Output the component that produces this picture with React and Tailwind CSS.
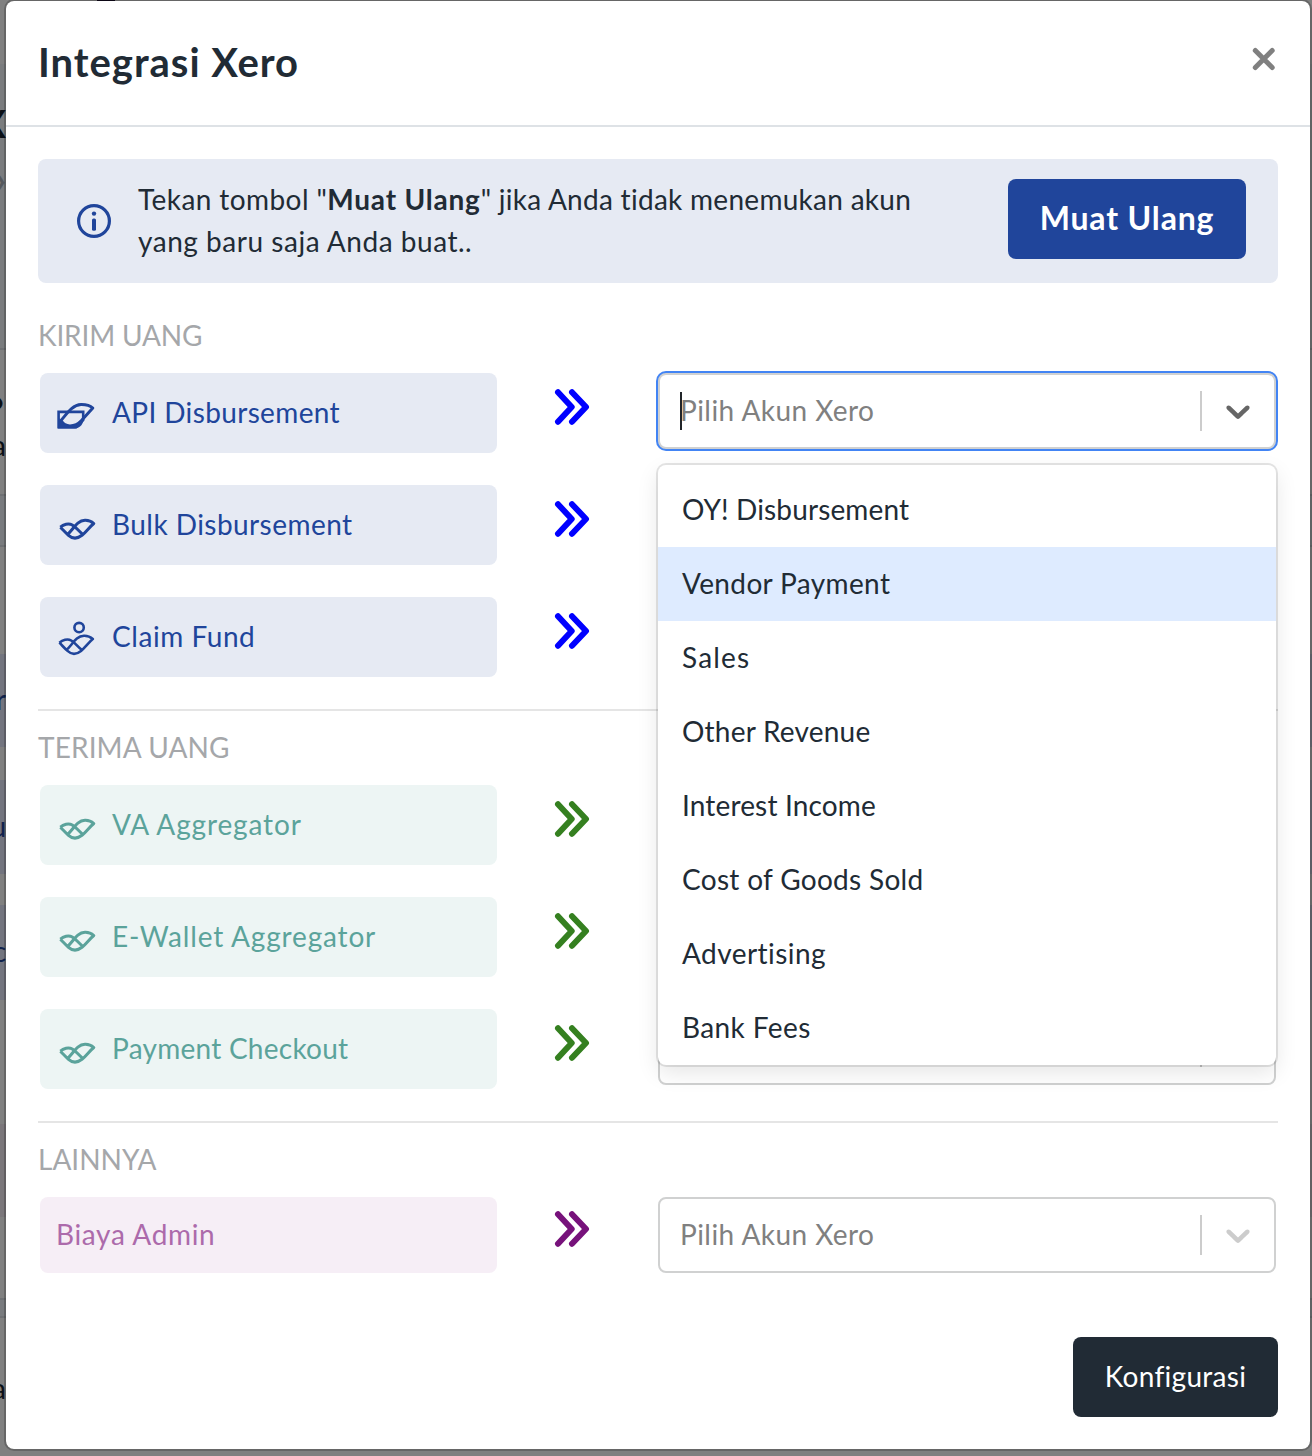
import React from "react";

const BulkIcon = () => (
  <svg viewBox="0 0 40 40" className="h-10 w-10 shrink-0" fill="none" stroke="currentColor" strokeWidth="3" strokeLinejoin="round">
    <path d="M4.4 22.2C7.5 19.300 12.500 17.900 16 19.800C19.500 21.600 22 25.500 27 29.600" />
    <path d="M11.300 29.600C17 25 20.500 15.500 29 15.300C32.500 15.200 35.500 16.400 37.800 18.500C33.500 22 30 27 26 30.300C21 34.200 16.500 33.900 12.500 30.300C9.500 27.600 7.200 25 4.400 22.200" />
  </svg>
);

const ClaimIcon = () => (
  <svg viewBox="0 0 40 40" className="h-10 w-10 shrink-0" fill="none" stroke="currentColor" strokeWidth="2.6" strokeLinejoin="round">
    <circle cx="23.1" cy="10.6" r="4.7" />
    <path d="M3.4 25.7C6.5 22.900 11.500 21.400 15 23.300C18.500 25.100 21 29 26 33.100" />
    <path d="M10.300 33.100C16 28.500 19.500 19 28 18.800C31.500 18.700 34.500 19.900 36.800 22C32.500 25.500 29 30.700 25 33.900C20 37.900 15.500 37.600 11.500 33.900C8.500 31.200 6.200 28.500 3.400 25.700" />
  </svg>
);

const ApiIcon = () => (
  <svg viewBox="0 0 40 40" className="h-10 w-10 shrink-0" fill="none" stroke="currentColor" strokeLinejoin="round">
    <path d="M2.600 18.900H27.200V27L20 34.200H2.600Z" strokeWidth="2.600" strokeLinejoin="miter" />
    <path d="M5 27.500C10 22 16 11.700 25 11.500C30 11.400 34 12.500 36.800 15.100L25.500 27.500C22 31.300 18 32.900 14 32.900C10 32.900 7 31 5 27.500Z" strokeWidth="3" />
    <path d="M2 23L5 28.500C7 31.500 10 33 14 33C18 33 22 31 25 27L28.400 22.500C28 31 24 35.400 19 35.400H2Z" fill="currentColor" stroke="none" />
  </svg>
);

const DoubleChevron = ({ className }) => (
  <svg viewBox="0 0 36 36" className={"ml-[57px] h-9 w-9 shrink-0 " + className} fill="none" stroke="currentColor" strokeWidth="6" strokeLinecap="round" strokeLinejoin="round">
    <path d="M4 3.200L17.700 18L4 32.800M18 3.200L32 18L18 32.800" />
  </svg>
);

function Select({ focused, placeholder }) {
  return (
    <div
      className={
        "ml-[68px] flex h-[76px] w-[618px] items-center rounded-lg border-2 border-[#d0d1d1] bg-white " +
        (focused ? "shadow-[0_0_0_2px_#4284f4]" : "")
      }
    >
      {focused && <div className="-mr-0.5 ml-5 h-[38px] w-0.5 bg-[#212529]" />}
      <span className={"flex-1 pb-[3px] tracking-[0.46px] text-[#808080] " + (focused ? "" : "ml-5")}>{placeholder}</span>
      <div className="h-10 w-0.5 bg-[#cccccc]" />
      <svg viewBox="0 0 20 20" className={"mx-4 h-10 w-10 " + (focused ? "text-[#666666]" : "text-[#cccccc]")} fill="currentColor">
        <path d="M4.516 7.548c0.436-0.446 1.043-0.481 1.576 0l3.908 3.747 3.908-3.747c0.533-0.481 1.141-0.446 1.574 0 0.436 0.445 0.408 1.197 0 1.615-0.406 0.418-4.695 4.502-4.695 4.502-0.217 0.223-0.502 0.335-0.787 0.335s-0.570-0.112-0.789-0.335c0 0-4.287-4.084-4.695-4.502s-0.436-1.170 0-1.615z" />
      </svg>
    </div>
  );
}

const OPTIONS = [
  ["OY! Disbursement", "tracking-[0.14px]"],
  ["Vendor Payment", "tracking-[0.36px]"],
  ["Sales", "tracking-[1.17px]"],
  ["Other Revenue", "tracking-[0.22px]"],
  ["Interest Income", "tracking-[0.15px]"],
  ["Cost of Goods Sold", "tracking-[0.31px]"],
  ["Advertising", "tracking-[0.45px]"],
  ["Bank Fees", "tracking-[0.4px]"],
];

function Menu() {
  return (
    <ul className="absolute top-[92px] right-[2px] z-10 h-[600px] w-[618px] overflow-hidden rounded-lg bg-white pt-2 shadow-[0_0_0_2px_rgba(0,0,0,0.1),0_8px_22px_rgba(0,0,0,0.1)]">
      {OPTIONS.map(([label, tracking]) => (
        <li
          key={label}
          className={"flex h-[74px] items-center pb-[3px] pl-6 " + tracking + (label === "Vendor Payment" ? " bg-[#deebff]" : "")}
        >
          {label}
        </li>
      ))}
    </ul>
  );
}

const SEND = [
  { label: "API Disbursement", tracking: "tracking-[0.36px]", Icon: ApiIcon, open: true },
  { label: "Bulk Disbursement", tracking: "tracking-[0.45px]", Icon: BulkIcon },
  { label: "Claim Fund", tracking: "tracking-[0.55px]", Icon: ClaimIcon },
];
const RECEIVE = [
  { label: "VA Aggregator", tracking: "tracking-[0.87px]", Icon: BulkIcon },
  { label: "E-Wallet Aggregator", tracking: "tracking-[0.83px]", Icon: BulkIcon },
  { label: "Payment Checkout", tracking: "tracking-[0.26px]", Icon: BulkIcon },
];

function Rows({ items, box, arrow }) {
  return (
    <div className="mt-[17px] flex flex-col gap-8">
      {items.map(({ label, tracking, Icon, open }) => (
        <div key={label} className="relative flex h-20 items-start pl-0.5">
          <div className={"flex h-20 w-[457px] items-center rounded-lg pl-4 " + box}>
            <Icon />
            <span className={"ml-4 pb-[3px] " + tracking}>{label}</span>
          </div>
          <DoubleChevron className={"mt-4 " + arrow} />
          <Select focused={open} placeholder={open ? "Pilih Akun Xero" : ""} />
          {open && <Menu />}
        </div>
      ))}
    </div>
  );
}

const BANDS = [
  ["h-[64px] bg-[#808080]"],
  ["h-[90px] bg-[#7a7c7e]", "X", "pt-[38px] text-[38px] font-bold text-[#0b1016]"],
  ["h-[194px] bg-[#7a7c7e]", "›", "pt-[4px] text-[34px] font-bold text-[#55585c]"],
  ["h-[2px] bg-[#6f7174]"],
  ["h-[74px] bg-[#808080]", "•", "pt-[30px] text-[34px] text-[#0b1016]"],
  ["h-[70px] bg-[#808080]", "a", "text-[28px] text-[#0b1016]"],
  ["h-[2px] bg-[#6f7174]"],
  ["h-[49px] bg-[#797b7e]"],
  ["h-[2px] bg-[#6f7174]"],
  ["h-[107px] bg-[#808080]"],
  ["h-[93px] bg-[#73757f]", "r", "pt-[24px] text-[28px] text-[#10224d]"],
  ["h-[33px] bg-[#808080]"],
  ["h-[94px] bg-[#73757f]", "u", "pt-[25px] text-[28px] text-[#10224d]"],
  ["h-[31px] bg-[#808080]"],
  ["h-[95px] bg-[#73757f]", "c", "pt-[25px] text-[28px] text-[#10224d]"],
  ["h-[124px] bg-[#808080]"],
  ["h-[93px] bg-[#7b777b]"],
  ["h-[81px] bg-[#808080]"],
  ["h-[2px] bg-[#6f7174]"],
  ["h-[16px] bg-[#797b7e]"],
  ["h-[2px] bg-[#6f7174]"],
  ["h-[138px] bg-[#808080]", "a", "pt-[49px] text-[28px] text-[#0b1016]"],
];

function Backdrop() {
  return (
    <div className="absolute inset-0 flex flex-col overflow-hidden" aria-hidden="true">
      {BANDS.map(([band, glyph, style], i) => (
        <div key={i} className={"shrink-0 overflow-hidden " + band}>
          {glyph && <div className={"flex w-[6px] justify-end leading-[42px] " + style}>{glyph}</div>}
        </div>
      ))}
    </div>
  );
}

export default function App() {
  return (
    <div className="relative flex h-[1456px] w-[1312px] overflow-hidden bg-[#808080] font-['Lato',sans-serif] text-[28px] leading-[42px] text-[#212b35]">
      <Backdrop />
      <div className="relative -mt-px ml-1 h-[1452px] w-[1308px] shrink-0 rounded-[10px] border-2 border-black/20 bg-white bg-clip-padding">
        <header className="flex h-[126px] items-start justify-between border-b-2 border-[#dee2e6] pr-[34px] pl-8">
          <h1 className="mt-[31px] text-[40px] leading-[60px] font-bold tracking-[0.98px]">Integrasi Xero</h1>
          <button aria-label="Tutup" className="mt-[46px] text-[#808080]">
            <svg viewBox="0 0 24 24" className="h-6 w-6" fill="none" stroke="currentColor" strokeWidth="5" strokeLinecap="round">
              <path d="M3.300 3.500L20.200 20.500M20.200 3.500L3.300 20.500" />
            </svg>
          </button>
        </header>

        <main className="px-8 pt-8">
          <div className="flex h-[124px] items-start rounded-lg bg-[#e6eaf3] pr-8 pl-[38px]">
            <svg viewBox="0 0 36 36" className="mt-11 h-9 w-9 shrink-0 text-[#20459b]">
              <circle cx="18" cy="18" r="15.400" fill="none" stroke="currentColor" strokeWidth="3.200" />
              <circle cx="18" cy="10.600" r="2.200" fill="currentColor" />
              <rect x="16" y="15.600" width="4" height="12.200" rx="1.500" fill="currentColor" />
            </svg>
            <div className="mt-[19px] ml-[26px] flex-1 whitespace-nowrap">
              <p>
                <span className="tracking-[0.42px]">Tekan tombol "</span>
                <b className="tracking-[0.78px]">Muat Ulang</b>
                <span className="tracking-[0.28px]">" jika Anda tidak menemukan akun</span>
              </p>
              <p className="tracking-[0.53px]">yang baru saja Anda buat..</p>
            </div>
            <button className="mt-5 h-20 w-[238px] rounded-lg bg-[#20459b] pb-[3px] text-[32px] font-bold tracking-[0.84px] text-white">
              Muat Ulang
            </button>
          </div>

          <section className="mt-[31px]">
            <h2 className="tracking-[-0.15px] text-[#a5a7aa]">KIRIM UANG</h2>
            <Rows items={SEND} box="bg-[#e6eaf3] text-[#20459b]" arrow="text-[#0000ff]" />
          </section>

          <section className="mt-8 border-t-2 border-[#e5e5e5] pt-[15px]">
            <h2 className="tracking-[0.13px] text-[#a5a7aa]">TERIMA UANG</h2>
            <Rows items={RECEIVE} box="bg-[#edf5f4] text-[#5ba39b]" arrow="text-[#358020]" />
          </section>

          <section className="mt-8 border-t-2 border-[#e5e5e5] pt-[15px]">
            <h2 className="text-[#a5a7aa]">LAINNYA</h2>
            <div className="mt-[17px] flex h-[76px] items-start pl-0.5">
              <div className="flex h-[76px] w-[457px] items-center rounded-lg bg-[#f6eef6] pb-[3px] pl-4 tracking-[0.66px] text-[#ac6aab]">
                Biaya Admin
              </div>
              <DoubleChevron className="mt-[14px] text-[#77127b]" />
              <Select placeholder="Pilih Akun Xero" />
            </div>
          </section>

          <footer className="mt-16 flex justify-end">
            <button className="h-20 w-[205px] rounded-lg bg-[#212b35] pb-[3px] tracking-[0.3px] text-white">Konfigurasi</button>
          </footer>
        </main>
      </div>
      <div className="absolute top-0 left-[97px] h-px w-[18px] bg-[#0b0614]" />
    </div>
  );
}
